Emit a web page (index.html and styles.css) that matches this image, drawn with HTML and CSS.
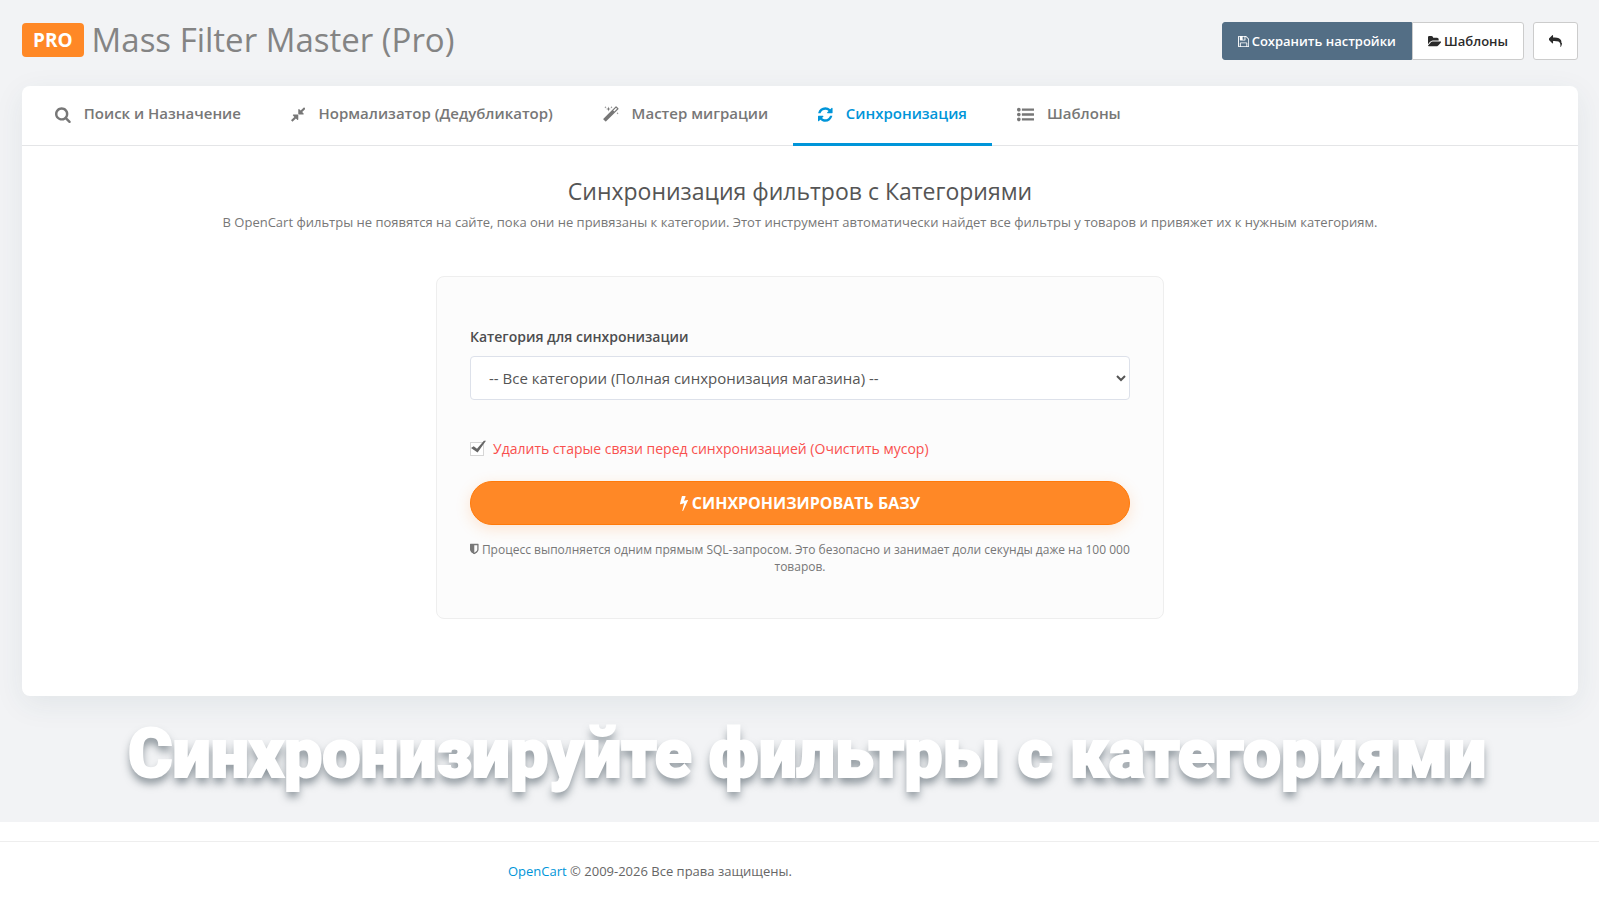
FILE: index.html
```
<!DOCTYPE html>
<html lang="ru">
<head>
    <meta charset="UTF-8">
    <meta name="viewport" content="width=device-width, initial-scale=1.0">
    <title>Mass Filter Master (Pro)</title>
    <link rel="stylesheet" href="styles.css">
</head>
<body>
    <main class="content">
        <header class="page-header">
            <h1><span class="badge">PRO</span>Mass Filter Master (Pro)</h1>
            <div class="actions">
                <div class="btn-group">
                    <button type="button" class="btn btn-primary">
                        <svg class="icon" viewBox="128 0 1536 1792"><path d="M512 1536h768v-384h-768v384zm896 0h128v-896q0-14-10-38.5t-20-34.5l-281-281q-10-10-34-20t-39-10v416q0 40-28 68t-68 28h-576q-40 0-68-28t-28-68v-416h-128v1280h128v-416q0-40 28-68t68-28h832q40 0 68 28t28 68v416zm-384-928v-320q0-13-9.5-22.5t-22.5-9.5h-192q-13 0-22.5 9.5t-9.5 22.5v320q0 13 9.5 22.5t22.5 9.5h192q13 0 22.5-9.5t9.5-22.5zm640 32v928q0 40-28 68t-68 28h-1344q-40 0-68-28t-28-68v-1344q0-40 28-68t68-28h928q40 0 88 20t76 48l280 280q28 28 48 76t20 88z"/></svg>
                        Сохранить настройки
                    </button>
                    <button type="button" class="btn btn-default">
                        <svg class="icon" viewBox="0 0 1820 1792"><path d="M1815 952q0 31-31 66l-336 396q-43 51-120.5 86.5t-143.5 35.5h-1088q-34 0-60.5-13t-26.5-43q0-31 31-66l336-396q43-51 120.5-86.5t143.5-35.5h1088q34 0 60.5 13t26.5 43zm-343-344v160h-832q-94 0-197 47.5t-164 119.5l-337 396-5 6q0-4-.5-12.5t-.5-12.5v-960q0-92 66-158t158-66h320q92 0 158 66t66 158v32h544q92 0 158 66t66 158z"/></svg>
                        Шаблоны
                    </button>
                </div>
                <button type="button" class="btn btn-default btn-back" aria-label="Назад">
                    <svg class="icon" viewBox="0 0 1792 1792"><path d="M1792 1120q0 166-127 451-3 7-10.5 24t-13.5 30-13 22q-12 17-28 17-15 0-23.5-10t-8.5-25q0-9 2.5-26.5t2.5-23.5q5-68 5-123 0-112-19.5-200.5t-54-153.5-89.5-112-118-78-147-45.5-169-20.5-198-6h-224v256q0 26-19 45t-45 19-45-19l-512-512q-19-19-19-45t19-45l512-512q19-19 45-19t45 19 19 45v256h224q713 0 875 403 53 134 53 333z"/></svg>
                </button>
            </div>
        </header>

        <div class="card">
            <nav class="tabs">
                <a href="#search" class="tab">
                    <svg class="icon" viewBox="64 0 1664 1792"><path d="M1216 832q0-185-131.5-316.5t-316.5-131.5-316.5 131.5-131.5 316.5 131.5 316.5 316.5 131.5 316.5-131.5 131.5-316.5zm512 832q0 52-38 90t-90 38q-54 0-90-38l-343-342q-179 124-399 124-143 0-273.5-55.5t-225-150-150-225-55.5-273.5 55.5-273.5 150-225 225-150 273.5-55.5 273.5 55.5 225 150 150 225 55.5 273.5q0 220-124 399l343 343q37 37 37 90z"/></svg>
                    Поиск и Назначение
                </a>
                <a href="#normalize" class="tab">
                    <svg class="icon" viewBox="128 0 1536 1792"><path d="M896 960v448q0 26-19 45t-45 19-45-19l-144-144-332 332q-10 10-23 10t-23-10l-114-114q-10-10-10-23t10-23l332-332-144-144q-19-19-19-45t19-45 45-19h448q26 0 45 19t19 45zm755-672q0 13-10 23l-332 332 144 144q19 19 19 45t-19 45-45 19h-448q-26 0-45-19t-19-45v-448q0-26 19-45t45-19 45 19l144 144 332-332q10-10 23-10t23 10l114 114q10 10 10 23z"/></svg>
                    Нормализатор (Дедубликатор)
                </a>
                <a href="#migrate" class="tab">
                    <svg class="icon" viewBox="64 0 1664 1792"><path d="M1254 581l293-293-107-107-293 293zm447-293q0 27-18 45l-1286 1286q-18 18-45 18t-45-18l-198-198q-18-18-18-45t18-45l1286-1286q18-18 45-18t45 18l198 198q18 18 18 45zm-1351-190l98 30-98 30-30 98-30-98-98-30 98-30 30-98zm350 162l196 60-196 60-60 196-60-196-196-60 196-60 60-196zm930 478l98 30-98 30-30 98-30-98-98-30 98-30 30-98zm-640-640l98 30-98 30-30 98-30-98-98-30 98-30 30-98z"/></svg>
                    Мастер миграции
                </a>
                <a href="#sync" class="tab active">
                    <svg class="icon" viewBox="128 0 1536 1792"><path d="M1639 1056q0 5-1 7-64 268-268 434.5t-478 166.5q-146 0-282.5-55t-243.5-157l-129 129q-19 19-45 19t-45-19-19-45v-448q0-26 19-45t45-19h448q26 0 45 19t19 45-19 45l-137 137q71 66 161 102t187 36q134 0 250-65t186-179q11-17 53-117 8-23 30-23h192q13 0 22.5 9.5t9.5 22.5zm25-800v448q0 26-19 45t-45 19h-448q-26 0-45-19t-19-45 19-45l138-138q-148-137-349-137-134 0-250 65t-186 179q-11 17-53 117-8 23-30 23h-199q-13 0-22.5-9.5t-9.5-22.5v-7q65-268 270-434.5t480-166.5q146 0 284 55.5t245 156.5l130-129q19-19 45-19t45 19 19 45z"/></svg>
                    Синхронизация
                </a>
                <a href="#templates" class="tab">
                    <svg class="icon" viewBox="0 0 1792 1792"><path d="M384 1408q0 80-56 136t-136 56-136-56-56-136 56-136 136-56 136 56 56 136zm0-512q0 80-56 136t-136 56-136-56-56-136 56-136 136-56 136 56 56 136zm1408 416v192q0 13-9.5 22.5t-22.5 9.5h-1216q-13 0-22.5-9.5t-9.5-22.5v-192q0-13 9.5-22.5t22.5-9.5h1216q13 0 22.5 9.5t9.5 22.5zm-1408-928q0 80-56 136t-136 56-136-56-56-136 56-136 136-56 136 56 56 136zm1408 416v192q0 13-9.5 22.5t-22.5 9.5h-1216q-13 0-22.5-9.5t-9.5-22.5v-192q0-13 9.5-22.5t22.5-9.5h1216q13 0 22.5 9.5t9.5 22.5zm0-512v192q0 13-9.5 22.5t-22.5 9.5h-1216q-13 0-22.5-9.5t-9.5-22.5v-192q0-13 9.5-22.5t22.5-9.5h1216q13 0 22.5 9.5t9.5 22.5z"/></svg>
                    Шаблоны
                </a>
            </nav>

            <section class="sync">
                <h2>Синхронизация фильтров с Категориями</h2>
                <p class="lead">В OpenCart фильтры не появятся на сайте, пока они не привязаны к категории. Этот инструмент автоматически найдет все фильтры у товаров и привяжет их к нужным категориям.</p>

                <form class="sync-form">
                    <label for="category" class="field-label">Категория для синхронизации</label>
                    <select id="category">
                        <option>-- Все категории (Полная синхронизация магазина) --</option>
                    </select>

                    <label for="clear-links" class="check">
                        <input type="checkbox" id="clear-links" checked>
                        Удалить старые связи перед синхронизацией (Очистить мусор)
                    </label>

                    <button type="button" class="btn-sync">
                        <svg class="icon" viewBox="448 0 896 1792"><path d="M1333 566q18 20 7 44l-540 1157q-13 25-42 25-4 0-14-2-17-5-25.5-19t-4.5-30l197-808-406 101q-4 1-12 1-18 0-31-11-18-15-13-39l201-825q4-16 18-26t32-10h328q19 0 32 12.5t13 29.5q0 8-5 18l-171 463 396-98q8-2 12-2 19 0 34 15z"/></svg>
                        СИНХРОНИЗИРОВАТЬ БАЗУ
                    </button>

                    <p class="hint"><svg class="icon" viewBox="256 0 1280 1792"><path d="M1344 960v-640h-448v1137q119-63 213-137 235-184 235-360zm192-768v768q0 86-33.5 170.5t-83 150-118 127.5-126.5 103-121 77.5-89.5 49.5-42.5 20q-12 6-26 6t-26-6q-16-7-42.5-20t-89.5-49.5-121-77.5-126.5-103-118-127.5-83-150-33.5-170.5v-768q0-26 19-45t45-19h1152q26 0 45 19t19 45z"/></svg> Процесс выполняется одним прямым SQL-запросом. Это безопасно и занимает доли секунды даже на 100 000 товаров.</p>
                </form>
            </section>
        </div>

        <p class="caption">Синхронизируйте фильтры с категориями</p>
    </main>

    <footer class="footer">
        <p><a href="#opencart">OpenCart</a> © 2009-2026 Все права защищены.</p>
    </footer>
</body>
</html>
```
FILE: styles.css
```
* { box-sizing: border-box; }
body { margin: 0; background: #fff; color: #666; font-family: "Open Sans", sans-serif; font-size: 13px; line-height: 18px; }
h1, h2, p { margin: 0; font-weight: 400; }
a { color: #0095d9; text-decoration: none; }
button, input, select { font-family: inherit; margin: 0; }
.icon { height: 1em; fill: currentColor; vertical-align: -1px; }

.content { background: #f2f3f5; padding: 22px 21px 24px 22px; }

/* header */
.page-header { display: flex; justify-content: space-between; align-items: flex-start; margin-bottom: 26px; }
.page-header h1 { display: flex; align-items: center; gap: 8px; color: #848484; font-size: 33px; line-height: 36px; }
.badge { padding: 0 11px; border-radius: 4px; background: #ff8826; color: #fff; font-size: 19px; font-weight: 700; line-height: 34px; }
.actions { display: flex; gap: 9px; }
.btn-group { display: flex; }
.btn { display: flex; align-items: center; gap: 3px; height: 38px; padding: 0 15px; border: 1px solid #ccc; border-radius: 3px; font-size: 13px; font-weight: 600; cursor: pointer; }
.btn-primary { background: #536e85; border-color: #536e85; border-radius: 3px 0 0 3px; color: #fff; }
.btn-default { background: #fff; color: #2a2a2a; }
.btn-group .btn-default { border-radius: 0 3px 3px 0; }

/* card and tabs */
.card { background: #fff; border-radius: 8px; box-shadow: 0 8px 30px rgba(40, 75, 90, 0.08); }
.tabs { display: flex; height: 60px; padding: 0 8px; border-bottom: 1px solid #e4e5e7; }
.tab { display: flex; gap: 13px; height: 60px; padding: 17px 25px 0; border-bottom: 3px solid transparent; color: #777; font-size: 15px; font-weight: 600; line-height: 20px; }
.tab .icon { height: 17px; margin-top: 3px; }
.tab.active { color: #0095d9; border-bottom-color: #0095d9; }

/* sync */
.sync { padding: 31px 20px 77px; text-align: center; }
.sync h2 { color: #555; font-size: 23px; line-height: 28px; }
.lead { margin-top: 8px; color: #777; }
.sync-form { max-width: 728px; margin: 45px auto 0; padding: 50px 33px 43px; border: 1px solid #eee; border-radius: 8px; background: #fcfcfc; text-align: left; }
.field-label { display: block; margin-bottom: 9px; color: #4c4d4f; font-size: 14px; font-weight: 600; line-height: 20px; }
select { width: 100%; height: 44px; padding: 0 14px; border: 1px solid #dde1ea; border-radius: 4px; background: #fff; color: #555; font-size: 15px; }
.check { display: flex; align-items: center; gap: 9px; margin: 39px 0 22px; color: #f9504e; font-size: 14px; line-height: 20px; }
.check input { appearance: none; position: relative; width: 14px; height: 14px; border: 1px solid #d6d6d6; background: #fff; }
.check input:checked::after { content: ""; position: absolute; top: -3px; left: 0; width: 15px; height: 13px; background: #666; clip-path: polygon(0 62%, 18% 48%, 40% 68%, 86% 6%, 100% 6%, 44% 96%); }
.btn-sync { display: flex; justify-content: center; align-items: center; gap: 4px; width: 100%; height: 44px; border: 1px solid #ff7a0a; border-radius: 22px; background: #ff8826; color: #fff; font-size: 16px; font-weight: 700; box-shadow: 0 4px 15px rgba(255, 136, 38, 0.2); cursor: pointer; }
.hint { margin-top: 16px; color: #777; font-size: 12px; line-height: 17px; text-align: center; }

.caption { margin-top: 14px; padding-left: 14px; color: #fff; font-family: Impact, Roboto, sans-serif; font-size: 68px; font-weight: 900; line-height: 88px; text-align: center; -webkit-text-stroke: 2px #fff; text-shadow: 0 6px 8px rgba(60, 75, 85, 0.6); }

/* footer */
.footer { margin-top: 19px; padding: 20px 0; border-top: 1px solid #eee; }
.footer p { padding-left: 508px; }
```
